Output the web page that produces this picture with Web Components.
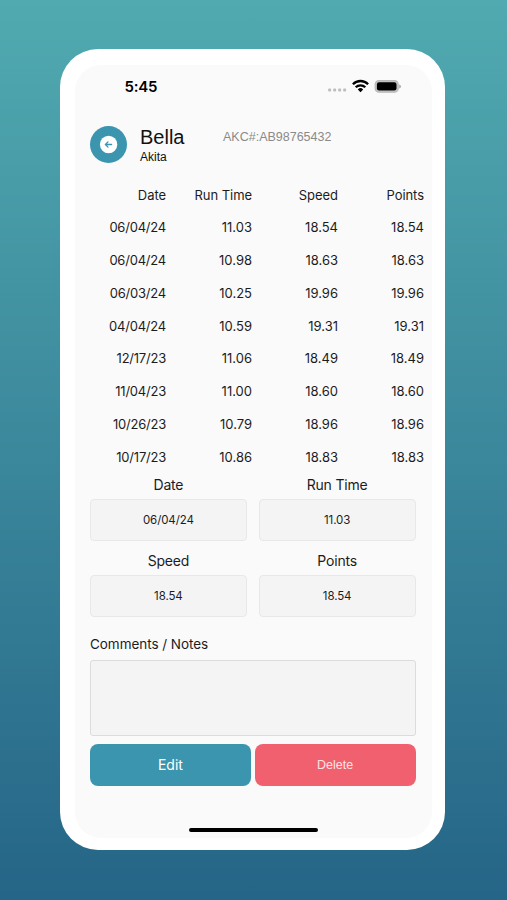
<!DOCTYPE html>
<html lang="en">
<head>
<meta charset="utf-8">
<title>Bella</title>
<style>
  body {
    margin: 0;
    height: 900px;
    overflow: hidden;
    font-family: 'Inter', 'Liberation Sans', sans-serif;
    color: #1c1c1e;
    background: linear-gradient(#51aab0, #256587);
  }
</style>
</head>
<body>
<phone-frame>
  <status-bar time="5:45"></status-bar>
  <dog-header name="Bella" breed="Akita" akc="AB98765432"></dog-header>
  <run-table></run-table>
  <run-form></run-form>
</phone-frame>

<script>
const makeTemplate = (html) => {
  const template = document.createElement('template');
  template.innerHTML = html;
  return template;
};

class BaseElement extends HTMLElement {
  constructor(template) {
    super();
    this.attachShadow({ mode: 'open' });
    this.shadowRoot.appendChild(template.content.cloneNode(true));
  }
  setText(selector, text) {
    this.shadowRoot.querySelector(selector).textContent = text;
  }
}

const phoneTemplate = makeTemplate(`
<style>
  :host {
    display: flow-root;
    height: 900px;
  }
  .phone {
    box-sizing: border-box;
    width: 385px;
    height: 801px;
    margin: 48.5px 0 0 60px;
    padding: 16px 13px 12px 15px;
    border-radius: 38px;
    background: #fff;
  }
  .screen {
    display: flex;
    flex-direction: column;
    height: 773px;
    border-radius: 26px;
    background: #fafafa;
  }
  .home {
    width: 129px;
    height: 4px;
    margin: auto 0 6px 113.5px;
    border-radius: 2px;
    background: #000;
  }
</style>
<div class="phone">
  <div class="screen">
    <slot></slot>
    <div class="home"></div>
  </div>
</div>
`);
class PhoneFrame extends BaseElement {
  constructor() {
    super(phoneTemplate);
  }
}

const statusTemplate = makeTemplate(`
<style>
  :host {
    display: flex;
    align-items: center;
    height: 43px;
    padding: 0 31px 0 49.5px;
    color: #000;
  }
  .time {
    flex: 1;
    font-size: 15px;
    font-weight: 600;
    letter-spacing: -0.2px;
  }
  svg { display: block; }
</style>
<span class="time"></span>
<svg width="75" height="16" viewBox="0 0 75 16">
  <g fill="#bdbdbf">
    <rect x="2.2" y="10.6" width="2.9" height="2.9" rx="0.8"/>
    <rect x="7.2" y="10.6" width="2.9" height="2.9" rx="0.8"/>
    <rect x="12.2" y="10.6" width="2.9" height="2.9" rx="0.8"/>
    <rect x="17.2" y="10.6" width="2.9" height="2.9" rx="0.8"/>
  </g>
  <g fill="none" stroke="#000" stroke-width="2.3">
    <path d="M26.9 6.2a10.6 10.6 0 0 1 15.2 0"/>
    <path d="M29.7 9.3a6.8 6.8 0 0 1 9.6 0"/>
  </g>
  <path d="M34.5 14.2l-2.7-2.8a3.9 3.9 0 0 1 5.4 0z"/>
  <rect x="49.2" y="2.6" width="23" height="11.6" rx="3.8" fill="#c4c4c6" stroke="#b9b9bb" stroke-width="1.2"/>
  <rect x="50.9" y="4.3" width="19.6" height="8.2" rx="2.2"/>
  <path d="M73.2 6.4q1.8.4 1.8 2t-1.8 2z" fill="#a8a8aa"/>
</svg>
`);
class StatusBar extends BaseElement {
  constructor() {
    super(statusTemplate);
  }
  connectedCallback() {
    this.setText('.time', this.getAttribute('time'));
  }
}

const headerTemplate = makeTemplate(`
<style>
  :host {
    display: flex;
    align-items: flex-start;
    height: 54px;
    padding: 17px 0 0 15px;
    font-family: 'Liberation Sans', Arial, sans-serif;
    color: #111;
  }
  button {
    width: 37px;
    height: 37px;
    margin-top: 1px;
    padding: 0;
    border: 0;
    border-radius: 50%;
    background: #3b95ae;
  }
  svg { display: block; }
  .names {
    width: 83px;
    margin-left: 13px;
  }
  .name {
    margin-top: 1.2px;
    font-size: 20px;
    line-height: 23px;
  }
  .breed {
    font-size: 12px;
    line-height: 16px;
  }
  .akc {
    margin-top: 4.5px;
    font-size: 12.5px;
    line-height: 16px;
    color: #8a8a8a;
  }
</style>
<button aria-label="Back">
  <svg width="37" height="37" viewBox="0 0 37 37">
    <circle cx="18.6" cy="18.5" r="8.7" fill="#fff"/>
    <path d="M21.6 18.5h-6M18 15.9l-2.6 2.6 2.6 2.6" fill="none" stroke="#3b95ae" stroke-width="1.3" stroke-linecap="round" stroke-linejoin="round"/>
  </svg>
</button>
<div class="names">
  <div class="name"></div>
  <div class="breed"></div>
</div>
<div class="akc"></div>
`);
class DogHeader extends BaseElement {
  constructor() {
    super(headerTemplate);
  }
  connectedCallback() {
    this.setText('.name', this.getAttribute('name'));
    this.setText('.breed', this.getAttribute('breed'));
    this.setText('.akc', 'AKC#:' + this.getAttribute('akc'));
  }
}

const runs = [
  ['06/04/24', '11.03', '18.54', '18.54'],
  ['06/04/24', '10.98', '18.63', '18.63'],
  ['06/03/24', '10.25', '19.96', '19.96'],
  ['04/04/24', '10.59', '19.31', '19.31'],
  ['12/17/23', '11.06', '18.49', '18.49'],
  ['11/04/23', '11.00', '18.60', '18.60'],
  ['10/26/23', '10.79', '18.96', '18.96'],
  ['10/17/23', '10.86', '18.83', '18.83'],
];

const tableTemplate = makeTemplate(`
<style>
  :host {
    display: block;
    width: 344px;
    margin-left: 5px;
    font-size: 13px;
  }
  .row {
    display: grid;
    grid-template-columns: repeat(4, 1fr);
    height: 32.8px;
    line-height: 32.8px;
    text-align: right;
  }
  .row span:first-child { letter-spacing: -0.22px; }
  .head span, .head span:first-child { letter-spacing: -0.05px; }
</style>
<div class="row head">
  <span>Date</span>
  <span>Run Time</span>
  <span>Speed</span>
  <span>Points</span>
</div>
`);
class RunTable extends BaseElement {
  constructor() {
    super(tableTemplate);
    runs.forEach((run) => {
      const row = document.createElement('div');
      row.className = 'row';
      run.forEach((value) => {
        const cell = document.createElement('span');
        cell.textContent = value;
        row.appendChild(cell);
      });
      this.shadowRoot.appendChild(row);
    });
  }
}

const fieldTemplate = makeTemplate(`
<style>
  :host {
    display: block;
    text-align: center;
  }
  .label {
    height: 26px;
    font-size: 14px;
    line-height: 23px;
    letter-spacing: -0.2px;
  }
  .value {
    box-sizing: border-box;
    height: 42px;
    border: 1px solid #e8e8e8;
    border-radius: 4px;
    background: #f4f4f4;
    font-size: 11.5px;
    line-height: 41px;
    letter-spacing: -0.1px;
  }
</style>
<div class="label"></div>
<div class="value"><slot></slot></div>
`);
class FormField extends BaseElement {
  constructor() {
    super(fieldTemplate);
  }
  connectedCallback() {
    this.setText('.label', this.getAttribute('label'));
  }
}

const formTemplate = makeTemplate(`
<style>
  :host {
    display: block;
    width: 325.5px;
    margin: -0.6px 0 0 15px;
  }
  .fields {
    display: grid;
    grid-template-columns: 1fr 1fr;
    gap: 7.7px 12px;
  }
  .label {
    margin-top: 17px;
    font-size: 13.5px;
    line-height: 20px;
    letter-spacing: -0.05px;
  }
  .notes {
    box-sizing: border-box;
    height: 75.5px;
    margin-top: 6.3px;
    border: 1px solid #dcdcdc;
    border-radius: 3px;
    background: #f4f4f4;
  }
  .actions {
    display: grid;
    grid-template-columns: 1fr 1fr;
    gap: 4px;
    margin-top: 8px;
  }
  button {
    height: 42px;
    padding: 0;
    border: 0;
    border-radius: 8px;
    color: #fff;
  }
  .edit {
    background: #3b95ae;
    font: 14px 'Inter', sans-serif;
  }
  .delete {
    background: #f1606e;
    font: 12.5px 'Liberation Sans', Arial, sans-serif;
    color: #ffe3e5;
  }
</style>
<div class="fields">
  <form-field label="Date">06/04/24</form-field>
  <form-field label="Run Time">11.03</form-field>
  <form-field label="Speed">18.54</form-field>
  <form-field label="Points">18.54</form-field>
</div>
<div class="label">Comments / Notes</div>
<div class="notes"></div>
<div class="actions">
  <button class="edit">Edit</button>
  <button class="delete">Delete</button>
</div>
`);
class RunForm extends BaseElement {
  constructor() {
    super(formTemplate);
  }
}

window.customElements.define('phone-frame', PhoneFrame);
window.customElements.define('status-bar', StatusBar);
window.customElements.define('dog-header', DogHeader);
window.customElements.define('run-table', RunTable);
window.customElements.define('form-field', FormField);
window.customElements.define('run-form', RunForm);
</script>
</body>
</html>
